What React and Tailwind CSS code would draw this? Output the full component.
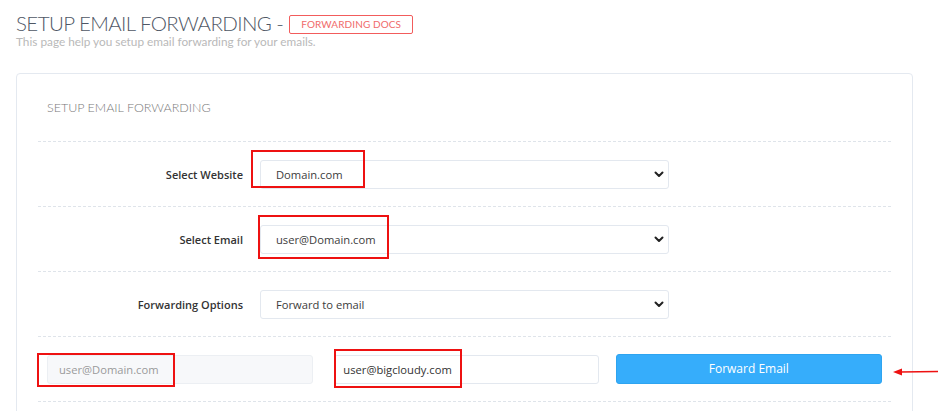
import React from "react";

const Chevron = () => (
  <svg width="10" height="7" viewBox="0 0 10 7" className="shrink-0">
    <path d="M1.5 1.5 L5 5 L8.5 1.5" fill="none" stroke="#222" strokeWidth="2" strokeLinecap="round" strokeLinejoin="round" />
  </svg>
);

// fake select box, looks like the native one
function SelectBox({ value }) {
  return (
    <div className="w-[409px] h-[29px] border border-[#e3e8ef] rounded-[3px] bg-white flex items-center justify-between pl-[15px] pr-[4px] text-[11.2px] leading-[16px] text-[#3c3c3c]">
      <span className="pt-[1px]">{value}</span>
      <Chevron />
    </div>
  );
}

function FormRow({ label, value }) {
  return (
    <div className="h-[65px] border-t border-dashed border-[#dfe4ea] flex items-center">
      <div className="w-[205px] text-right text-[11px] leading-[16px] pt-[1px] font-semibold text-[#333]">{label}</div>
      <div className="ml-[17px]">
        <SelectBox value={value} />
      </div>
    </div>
  );
}

// red highlight boxes drawn on top of the form
const Mark = ({ className }) => (
  <div className={"absolute border-2 border-[#ee1111] pointer-events-none " + className} />
);

export default function App() {
  return (
    <div className="relative w-[940px] h-[411px] overflow-hidden bg-white font-['Open_Sans',sans-serif]">
      <div className="pl-[16px] pt-[11px]">
        <div className="flex items-center">
          <h1 className="font-['Lato',sans-serif] font-light text-[20.5px] leading-[24px] text-[#4f5765] tracking-[-0.6px]">
            SETUP EMAIL FORWARDING -
          </h1>
          <span className="ml-[6px] mt-[2px] h-[19px] px-[11px] border-[1.5px] border-[#f25c5c] rounded-[2px] flex items-center font-['Lato',sans-serif] text-[10px] text-[#f06a6a] tracking-[0.1px]">
            FORWARDING DOCS
          </span>
        </div>
        <p className="font-['Lato',sans-serif] text-[11.8px] leading-[14px] text-[#b9b9b9]">
          This page help you setup email forwarding for your emails.
        </p>
      </div>

      <div className="ml-[16px] mt-[24px] w-[897px] h-[400px] border border-[#e4e9f0] rounded-[4px] px-[21px]">
        <div className="h-[67px] flex items-center pl-[9px] pt-[1px] font-['Lato',sans-serif] font-light text-[12.5px] text-[#7a7a7a]">
          SETUP EMAIL FORWARDING
        </div>

        <FormRow label="Select Website" value="Domain.com" />
        <FormRow label="Select Email" value="user@Domain.com" />
        <FormRow label="Forwarding Options" value="Forward to email" />

        <div className="h-[66px] border-t border-b border-dashed border-[#dfe4ea] grid grid-cols-3 items-center">
          <div className="px-[9px]">
            <div className="h-[29px] border border-[#eceff3] rounded-[3px] bg-[#f7f8fa] flex items-center pl-[11px] pt-[1px] text-[11.2px] leading-[16px] text-[#9a9a9a]">
              user@Domain.com
            </div>
          </div>
          <div className="pl-[12px] pr-[8px]">
            <div className="h-[29px] border border-[#e3e8ef] rounded-[3px] bg-white flex items-center pl-[8px] pt-[1px] text-[11.2px] leading-[16px] text-[#333]">
              user@bigcloudy.com
            </div>
          </div>
          <div className="px-[9px]">
            <button className="w-full h-[30px] rounded-[3px] bg-[#36adfb] border border-[#2ea4f0] text-white text-[12px] leading-[16px]">
              Forward Email
            </button>
          </div>
        </div>
      </div>

      <Mark className="left-[251px] top-[150px] w-[114px] h-[38px]" />
      <Mark className="left-[258px] top-[215px] w-[131px] h-[44px]" />
      <Mark className="left-[37px] top-[353px] w-[138px] h-[34px]" />
      <Mark className="left-[334px] top-[349px] w-[128px] h-[39px]" />

      <svg className="absolute left-[892px] top-[366px]" width="48" height="12" viewBox="0 0 48 12">
        <line x1="8" y1="6" x2="46" y2="5.5" stroke="#ee1111" strokeWidth="1.6" />
        <path d="M1 6 L10 2.5 L10 9.5 Z" fill="#ee1111" />
      </svg>
    </div>
  );
}
